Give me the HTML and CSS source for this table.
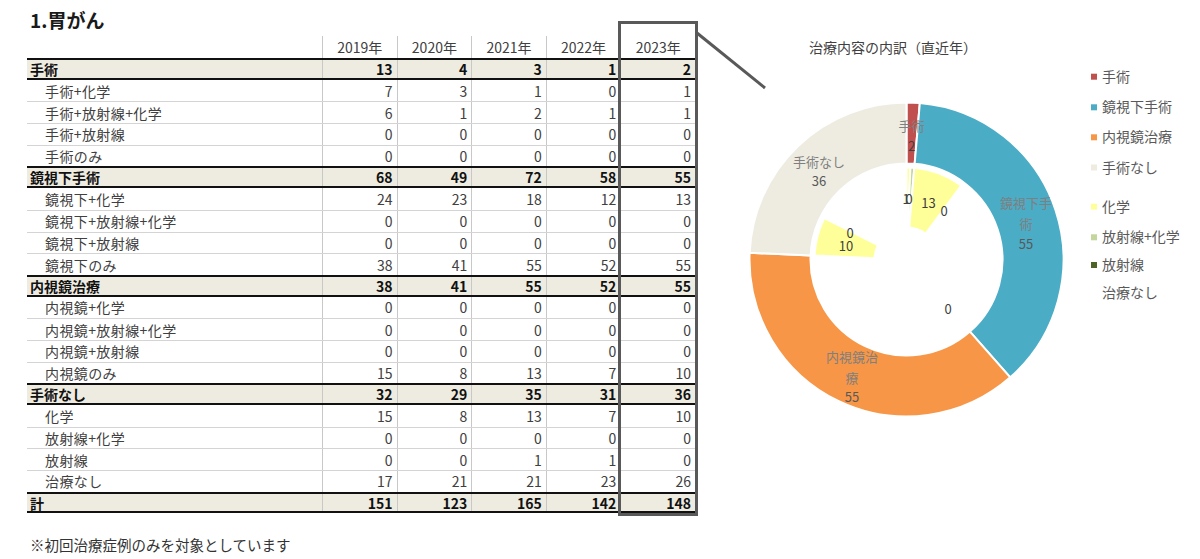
FILE: index.html
```html
<!DOCTYPE html>
<html lang="ja">
<head>
<meta charset="utf-8">
<title>1.胃がん</title>
<link rel="stylesheet" href="styles.css">
</head>
<body>
<div class="page">
  <section class="left">
    <h1 class="title">1.胃がん</h1>
    <div class="table-wrap">
      <div class="grid-table">
        <div class="row head"><div class="lab"></div><div class="yr">2019年</div><div class="yr">2020年</div><div class="yr">2021年</div><div class="yr">2022年</div><div class="yr">2023年</div></div>
        <div class="row grp"><div class="lab">手術</div><div class="num">13</div><div class="num">4</div><div class="num">3</div><div class="num">1</div><div class="num">2</div></div>
        <div class="row sub"><div class="lab">手術+化学</div><div class="num">7</div><div class="num">3</div><div class="num">1</div><div class="num">0</div><div class="num">1</div></div>
        <div class="row sub"><div class="lab">手術+放射線+化学</div><div class="num">6</div><div class="num">1</div><div class="num">2</div><div class="num">1</div><div class="num">1</div></div>
        <div class="row sub"><div class="lab">手術+放射線</div><div class="num">0</div><div class="num">0</div><div class="num">0</div><div class="num">0</div><div class="num">0</div></div>
        <div class="row sub"><div class="lab">手術のみ</div><div class="num">0</div><div class="num">0</div><div class="num">0</div><div class="num">0</div><div class="num">0</div></div>
        <div class="row grp"><div class="lab">鏡視下手術</div><div class="num">68</div><div class="num">49</div><div class="num">72</div><div class="num">58</div><div class="num">55</div></div>
        <div class="row sub"><div class="lab">鏡視下+化学</div><div class="num">24</div><div class="num">23</div><div class="num">18</div><div class="num">12</div><div class="num">13</div></div>
        <div class="row sub"><div class="lab">鏡視下+放射線+化学</div><div class="num">0</div><div class="num">0</div><div class="num">0</div><div class="num">0</div><div class="num">0</div></div>
        <div class="row sub"><div class="lab">鏡視下+放射線</div><div class="num">0</div><div class="num">0</div><div class="num">0</div><div class="num">0</div><div class="num">0</div></div>
        <div class="row sub"><div class="lab">鏡視下のみ</div><div class="num">38</div><div class="num">41</div><div class="num">55</div><div class="num">52</div><div class="num">55</div></div>
        <div class="row grp"><div class="lab">内視鏡治療</div><div class="num">38</div><div class="num">41</div><div class="num">55</div><div class="num">52</div><div class="num">55</div></div>
        <div class="row sub"><div class="lab">内視鏡+化学</div><div class="num">0</div><div class="num">0</div><div class="num">0</div><div class="num">0</div><div class="num">0</div></div>
        <div class="row sub"><div class="lab">内視鏡+放射線+化学</div><div class="num">0</div><div class="num">0</div><div class="num">0</div><div class="num">0</div><div class="num">0</div></div>
        <div class="row sub"><div class="lab">内視鏡+放射線</div><div class="num">0</div><div class="num">0</div><div class="num">0</div><div class="num">0</div><div class="num">0</div></div>
        <div class="row sub"><div class="lab">内視鏡のみ</div><div class="num">15</div><div class="num">8</div><div class="num">13</div><div class="num">7</div><div class="num">10</div></div>
        <div class="row grp"><div class="lab">手術なし</div><div class="num">32</div><div class="num">29</div><div class="num">35</div><div class="num">31</div><div class="num">36</div></div>
        <div class="row sub"><div class="lab">化学</div><div class="num">15</div><div class="num">8</div><div class="num">13</div><div class="num">7</div><div class="num">10</div></div>
        <div class="row sub"><div class="lab">放射線+化学</div><div class="num">0</div><div class="num">0</div><div class="num">0</div><div class="num">0</div><div class="num">0</div></div>
        <div class="row sub"><div class="lab">放射線</div><div class="num">0</div><div class="num">0</div><div class="num">1</div><div class="num">1</div><div class="num">0</div></div>
        <div class="row sub"><div class="lab">治療なし</div><div class="num">17</div><div class="num">21</div><div class="num">21</div><div class="num">23</div><div class="num">26</div></div>
        <div class="row grp"><div class="lab">計</div><div class="num">151</div><div class="num">123</div><div class="num">165</div><div class="num">142</div><div class="num">148</div></div>
      </div>
      <div class="highlight"></div>
    </div>
    <p class="note">※初回治療症例のみを対象としています</p>
  </section>

  <section class="chart">
    <svg class="chart-svg" width="500" height="559" viewBox="700 0 500 559" xmlns="http://www.w3.org/2000/svg">
      <line class="connector" x1="697" y1="33" x2="765" y2="88"/>
      <text class="chart-title" x="893" y="53">治療内容の内訳（直近年）</text>

      <g class="ring">
        <path class="s-red" d="M906.5,102.5 A157,157 0 0 1 919.815,103.065 L914.642,163.846 A96,96 0 0 0 906.5,163.5 Z"/>
        <path class="s-blue" d="M919.815,103.065 A157,157 0 0 1 1010.224,377.357 L969.923,331.565 A96,96 0 0 0 914.642,163.846 Z"/>
        <path class="s-orange" d="M1010.224,377.357 A157,157 0 0 1 749.641,252.838 L810.586,255.427 A96,96 0 0 0 969.923,331.565 Z"/>
        <path class="s-beige" d="M749.641,252.838 A157,157 0 0 1 906.5,102.5 L906.5,163.5 A96,96 0 0 0 810.586,255.427 Z"/>

        <path class="s-yellow" d="M906.5,167.5 A92,92 0 0 1 910.404,167.583 L907.858,227.529 A32,32 0 0 0 906.5,227.5 Z"/>
        <path class="s-lgreen" d="M910.404,167.583 A92,92 0 0 1 914.303,167.831 L909.214,227.615 A32,32 0 0 0 907.858,227.529 Z"/>
        <path class="s-yellow" d="M914.303,167.831 A92,92 0 0 1 961.2,185.527 L925.526,233.77 A32,32 0 0 0 909.214,227.615 Z"/>
        <path class="s-yellow" d="M814.583,255.596 A92,92 0 0 1 824.35,218.082 L877.926,245.094 A32,32 0 0 0 874.529,258.142 Z"/>
      </g>

      <g class="lbl-name">
        <text x="911.5" y="131">手術</text>
        <text x="819" y="166.5">手術なし</text>
        <text x="1026" y="208">鏡視下手</text>
        <text x="1026" y="229">術</text>
        <text x="852" y="361.5">内視鏡治</text>
        <text x="852" y="383">療</text>
      </g>
      <g class="lbl-num">
        <text class="dark" x="911.5" y="151">2</text>
        <text x="819" y="185.5">36</text>
        <text x="1026" y="248.5">55</text>
        <text x="852" y="402">55</text>
      </g>
      <g class="lbl-inner">
        <text x="906" y="204">1</text>
        <text x="909" y="204">0</text>
        <text x="928.5" y="208">13</text>
        <text x="944" y="215.5">0</text>
        <text x="850" y="238">0</text>
        <text x="846" y="251">10</text>
        <text x="948" y="314">0</text>
      </g>

      <g class="legend">
        <rect class="s-red" x="1091" y="73.7" width="6" height="6"/>
        <text x="1102" y="81.7">手術</text>
        <rect class="s-blue" x="1091" y="104.3" width="6" height="6"/>
        <text x="1102" y="112.3">鏡視下手術</text>
        <rect class="s-orange" x="1091" y="134.3" width="6" height="6"/>
        <text x="1102" y="142.3">内視鏡治療</text>
        <rect class="s-beige" x="1091" y="164.5" width="6" height="6"/>
        <text x="1102" y="172.5">手術なし</text>
        <rect class="s-yellow" x="1091" y="203.7" width="6" height="6"/>
        <text x="1102" y="211.7">化学</text>
        <rect class="s-lgreen" x="1091" y="234.3" width="6" height="6"/>
        <text x="1102" y="242.3">放射線+化学</text>
        <rect class="s-dgreen" x="1091" y="262" width="6" height="6"/>
        <text x="1102" y="270">放射線</text>
        <text x="1102" y="298.3">治療なし</text>
      </g>
    </svg>
  </section>
</div>
</body>
</html>
```
FILE: styles.css
```css
html, body {
  margin: 0;
  padding: 0;
  background: #ffffff;
}

body {
  font-family: "Noto Sans CJK JP", "Noto Sans", sans-serif;
  color: #333333;
}

.page {
  display: flex;
  width: 1200px;
  height: 559px;
  overflow: hidden;
}

.left {
  flex: none;
  width: 700px;
  padding-left: 27px;
  box-sizing: border-box;
}

.title {
  margin: 0;
  padding: 8px 0 0 3px;
  height: 24px;
  font-size: 19px;
  line-height: 24px;
  font-weight: 700;
  color: #1a1a1a;
}

.table-wrap {
  position: relative;
  margin-top: 4px;
  width: 668px;
}

.grid-table {
  display: flex;
  flex-direction: column;
  width: 668px;
  font-size: 14px;
}

.row {
  display: grid;
  grid-template-columns: 295px repeat(5, 74.6px);
  height: 21.7px;
  box-sizing: border-box;
}

.row > div {
  display: flex;
  align-items: center;
  justify-content: flex-end;
  padding-right: 4px;
  line-height: 18px;
  white-space: nowrap;
  overflow: hidden;
  border-left: 1px solid #c8c8c8;
  box-sizing: border-box;
}

.row > .lab {
  justify-content: flex-start;
  border-left: none;
  word-spacing: 0;
}

.head {
  height: 22px;
}

.head > .yr {
  justify-content: center;
  padding-right: 0;
  color: #404040;
}

.sub {
  color: #404040;
  border-top: 1px solid #d4d4d4;
}

.grp + .sub {
  border-top: none;
}

.sub > .lab {
  padding-left: 18px;
  letter-spacing: 0.4px;
}

.grp {
  background: #eeece1;
  font-weight: 700;
  color: #111111;
  border-top: 2px solid #111111;
  border-bottom: 2px solid #111111;
}

.grp > .lab {
  padding-left: 3px;
}

.highlight {
  position: absolute;
  left: 591px;
  top: -15px;
  width: 80px;
  height: 495px;
  box-sizing: border-box;
  border: 3px solid #595959;
  pointer-events: none;
}

.note {
  margin: 22px 0 0 3px;
  font-size: 14.5px;
  line-height: 20px;
  color: #333333;
}

.chart {
  flex: none;
  width: 500px;
}

.chart-svg {
  display: block;
  overflow: visible;
  font-family: "Noto Sans CJK JP", "Noto Sans", sans-serif;
}

.connector {
  stroke: #595959;
  stroke-width: 3;
}

.chart-title {
  font-size: 14px;
  fill: #404040;
  text-anchor: middle;
}

.ring path {
  stroke: #ffffff;
  stroke-width: 2;
  stroke-linejoin: round;
}

.s-red { fill: #c0504d; }
.s-blue { fill: #4bacc6; }
.s-orange { fill: #f79646; }
.s-beige { fill: #eeece1; }
.s-yellow { fill: #ffff99; }
.s-lgreen { fill: #c3d69b; }
.s-dgreen { fill: #4f6228; }

.lbl-name text {
  font-size: 13px;
  fill: #7f7f7f;
  text-anchor: middle;
}

.lbl-num text {
  font-size: 13px;
  fill: #595959;
  text-anchor: middle;
}

.lbl-num text.dark {
  fill: #404040;
}

.lbl-inner text {
  font-size: 13px;
  fill: #404040;
  text-anchor: middle;
}

.legend text {
  font-size: 14px;
  fill: #595959;
}
```
